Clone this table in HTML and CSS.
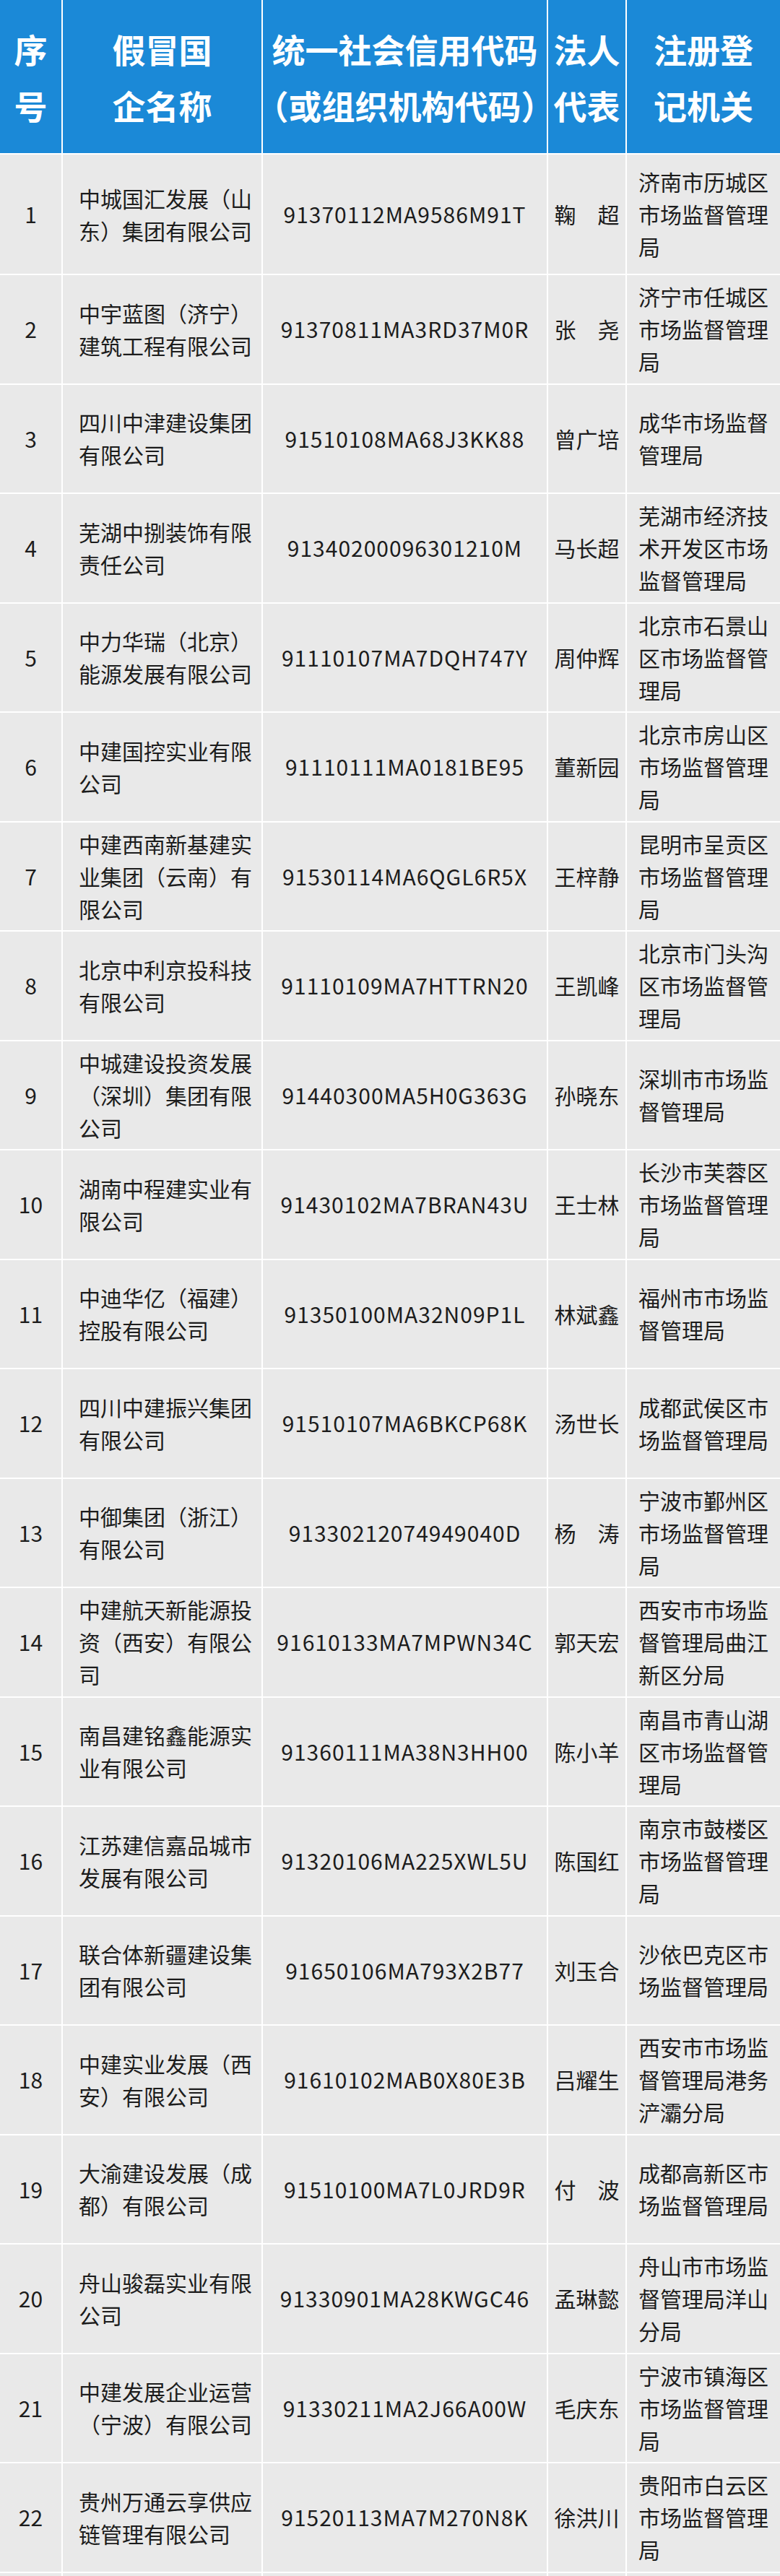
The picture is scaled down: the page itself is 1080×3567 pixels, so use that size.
FILE: index.html
```html
<!DOCTYPE html>
<html lang="zh-CN">
<head>
<meta charset="utf-8">
<title>假冒国企名单</title>
<link rel="stylesheet" href="styles.css">
</head>
<body>
<div class="table">
  <div class="row head">
    <div class="cell c1"><span>序</span><span>号</span></div>
    <div class="cell c2"><span>假冒国</span><span>企名称</span></div>
    <div class="cell c3"><span>统一社会信用代码</span><span>（或组织机构代码）</span></div>
    <div class="cell c4"><span>法人</span><span>代表</span></div>
    <div class="cell c5"><span>注册登</span><span>记机关</span></div>
  </div>
  <div class="row first"><div class="cell c1">1</div><div class="cell c2"><p>中城国汇发展（山东）集团有限公司</p></div><div class="cell c3">91370112MA9586M91T</div><div class="cell c4">鞠　超</div><div class="cell c5"><p>济南市历城区市场监督管理局</p></div></div>
  <div class="row"><div class="cell c1">2</div><div class="cell c2"><p>中宇蓝图（济宁）建筑工程有限公司</p></div><div class="cell c3">91370811MA3RD37M0R</div><div class="cell c4">张　尧</div><div class="cell c5"><p>济宁市任城区市场监督管理局</p></div></div>
  <div class="row"><div class="cell c1">3</div><div class="cell c2"><p>四川中津建设集团有限公司</p></div><div class="cell c3">91510108MA68J3KK88</div><div class="cell c4">曾广培</div><div class="cell c5"><p>成华市场监督管理局</p></div></div>
  <div class="row"><div class="cell c1">4</div><div class="cell c2"><p>芜湖中捌装饰有限责任公司</p></div><div class="cell c3">91340200096301210M</div><div class="cell c4">马长超</div><div class="cell c5"><p>芜湖市经济技术开发区市场监督管理局</p></div></div>
  <div class="row"><div class="cell c1">5</div><div class="cell c2"><p>中力华瑞（北京）能源发展有限公司</p></div><div class="cell c3">91110107MA7DQH747Y</div><div class="cell c4">周仲辉</div><div class="cell c5"><p>北京市石景山区市场监督管理局</p></div></div>
  <div class="row"><div class="cell c1">6</div><div class="cell c2"><p>中建国控实业有限公司</p></div><div class="cell c3">91110111MA0181BE95</div><div class="cell c4">董新园</div><div class="cell c5"><p>北京市房山区市场监督管理局</p></div></div>
  <div class="row"><div class="cell c1">7</div><div class="cell c2"><p>中建西南新基建实业集团（云南）有限公司</p></div><div class="cell c3">91530114MA6QGL6R5X</div><div class="cell c4">王梓静</div><div class="cell c5"><p>昆明市呈贡区市场监督管理局</p></div></div>
  <div class="row"><div class="cell c1">8</div><div class="cell c2"><p>北京中利京投科技有限公司</p></div><div class="cell c3">91110109MA7HTTRN20</div><div class="cell c4">王凯峰</div><div class="cell c5"><p>北京市门头沟区市场监督管理局</p></div></div>
  <div class="row"><div class="cell c1">9</div><div class="cell c2"><p>中城建设投资发展（深圳）集团有限公司</p></div><div class="cell c3">91440300MA5H0G363G</div><div class="cell c4">孙晓东</div><div class="cell c5"><p>深圳市市场监督管理局</p></div></div>
  <div class="row"><div class="cell c1">10</div><div class="cell c2"><p>湖南中程建实业有限公司</p></div><div class="cell c3">91430102MA7BRAN43U</div><div class="cell c4">王士林</div><div class="cell c5"><p>长沙市芙蓉区市场监督管理局</p></div></div>
  <div class="row"><div class="cell c1">11</div><div class="cell c2"><p>中迪华亿（福建）控股有限公司</p></div><div class="cell c3">91350100MA32N09P1L</div><div class="cell c4">林斌鑫</div><div class="cell c5"><p>福州市市场监督管理局</p></div></div>
  <div class="row"><div class="cell c1">12</div><div class="cell c2"><p>四川中建振兴集团有限公司</p></div><div class="cell c3">91510107MA6BKCP68K</div><div class="cell c4">汤世长</div><div class="cell c5"><p>成都武侯区市场监督管理局</p></div></div>
  <div class="row"><div class="cell c1">13</div><div class="cell c2"><p>中御集团（浙江）有限公司</p></div><div class="cell c3">91330212074949040D</div><div class="cell c4">杨　涛</div><div class="cell c5"><p>宁波市鄞州区市场监督管理局</p></div></div>
  <div class="row"><div class="cell c1">14</div><div class="cell c2"><p>中建航天新能源投资（西安）有限公司</p></div><div class="cell c3">91610133MA7MPWN34C</div><div class="cell c4">郭天宏</div><div class="cell c5"><p>西安市市场监督管理局曲江新区分局</p></div></div>
  <div class="row"><div class="cell c1">15</div><div class="cell c2"><p>南昌建铭鑫能源实业有限公司</p></div><div class="cell c3">91360111MA38N3HH00</div><div class="cell c4">陈小羊</div><div class="cell c5"><p>南昌市青山湖区市场监督管理局</p></div></div>
  <div class="row"><div class="cell c1">16</div><div class="cell c2"><p>江苏建信嘉品城市发展有限公司</p></div><div class="cell c3">91320106MA225XWL5U</div><div class="cell c4">陈国红</div><div class="cell c5"><p>南京市鼓楼区市场监督管理局</p></div></div>
  <div class="row"><div class="cell c1">17</div><div class="cell c2"><p>联合体新疆建设集团有限公司</p></div><div class="cell c3">91650106MA793X2B77</div><div class="cell c4">刘玉合</div><div class="cell c5"><p>沙依巴克区市场监督管理局</p></div></div>
  <div class="row"><div class="cell c1">18</div><div class="cell c2"><p>中建实业发展（西安）有限公司</p></div><div class="cell c3">91610102MAB0X80E3B</div><div class="cell c4">吕耀生</div><div class="cell c5"><p>西安市市场监督管理局港务浐灞分局</p></div></div>
  <div class="row"><div class="cell c1">19</div><div class="cell c2"><p>大渝建设发展（成都）有限公司</p></div><div class="cell c3">91510100MA7L0JRD9R</div><div class="cell c4">付　波</div><div class="cell c5"><p>成都高新区市场监督管理局</p></div></div>
  <div class="row"><div class="cell c1">20</div><div class="cell c2"><p>舟山骏磊实业有限公司</p></div><div class="cell c3">91330901MA28KWGC46</div><div class="cell c4">孟琳懿</div><div class="cell c5"><p>舟山市市场监督管理局洋山分局</p></div></div>
  <div class="row"><div class="cell c1">21</div><div class="cell c2"><p>中建发展企业运营（宁波）有限公司</p></div><div class="cell c3">91330211MA2J66A00W</div><div class="cell c4">毛庆东</div><div class="cell c5"><p>宁波市镇海区市场监督管理局</p></div></div>
  <div class="row"><div class="cell c1">22</div><div class="cell c2"><p>贵州万通云享供应链管理有限公司</p></div><div class="cell c3">91520113MA7M270N8K</div><div class="cell c4">徐洪川</div><div class="cell c5"><p>贵阳市白云区市场监督管理局</p></div></div>
  <div class="row"><div class="cell c1"></div><div class="cell c2"></div><div class="cell c3"></div><div class="cell c4"></div><div class="cell c5"></div></div>
</div>
</body>
</html>
```

FILE: styles.css
```css
html, body {
  margin: 0;
  padding: 0;
  background: #ffffff;
}

body {
  font-family: "Noto Sans CJK SC", "Noto Sans", sans-serif;
  color: #1c1c1c;
  font-size: 30px;
  line-height: 45px;
}

.table {
  display: flex;
  flex-direction: column;
  gap: 2px;
  width: 1080px;
}

.row {
  display: grid;
  grid-template-columns: 85px 275px 393px 107px 212px;
  column-gap: 2px;
  height: 149.5px;
  flex: none;
}

.row.first {
  height: 165px;
}

.row.head {
  height: 212px;
}

.cell {
  display: flex;
  align-items: center;
  background: #e9e9e9;
  box-sizing: border-box;
  overflow: visible;
  min-width: 0;
}

.cell p {
  margin: 0;
}

.c1 {
  justify-content: center;
}

.c2 {
  padding-left: 22px;
}

.c2 p {
  width: 245px;
}

.c3 {
  justify-content: center;
  letter-spacing: 1px;
}

.c4 {
  justify-content: center;
}

.c5 {
  padding-left: 16px;
}

.c5 p {
  width: 188px;
}

.head .cell {
  background: #1b89d7;
  color: #ffffff;
  font-weight: 700;
  font-size: 46px;
  line-height: 78px;
  flex-direction: column;
  justify-content: center;
  align-items: center;
  padding: 0;
  letter-spacing: 0;
  white-space: nowrap;
}
```
